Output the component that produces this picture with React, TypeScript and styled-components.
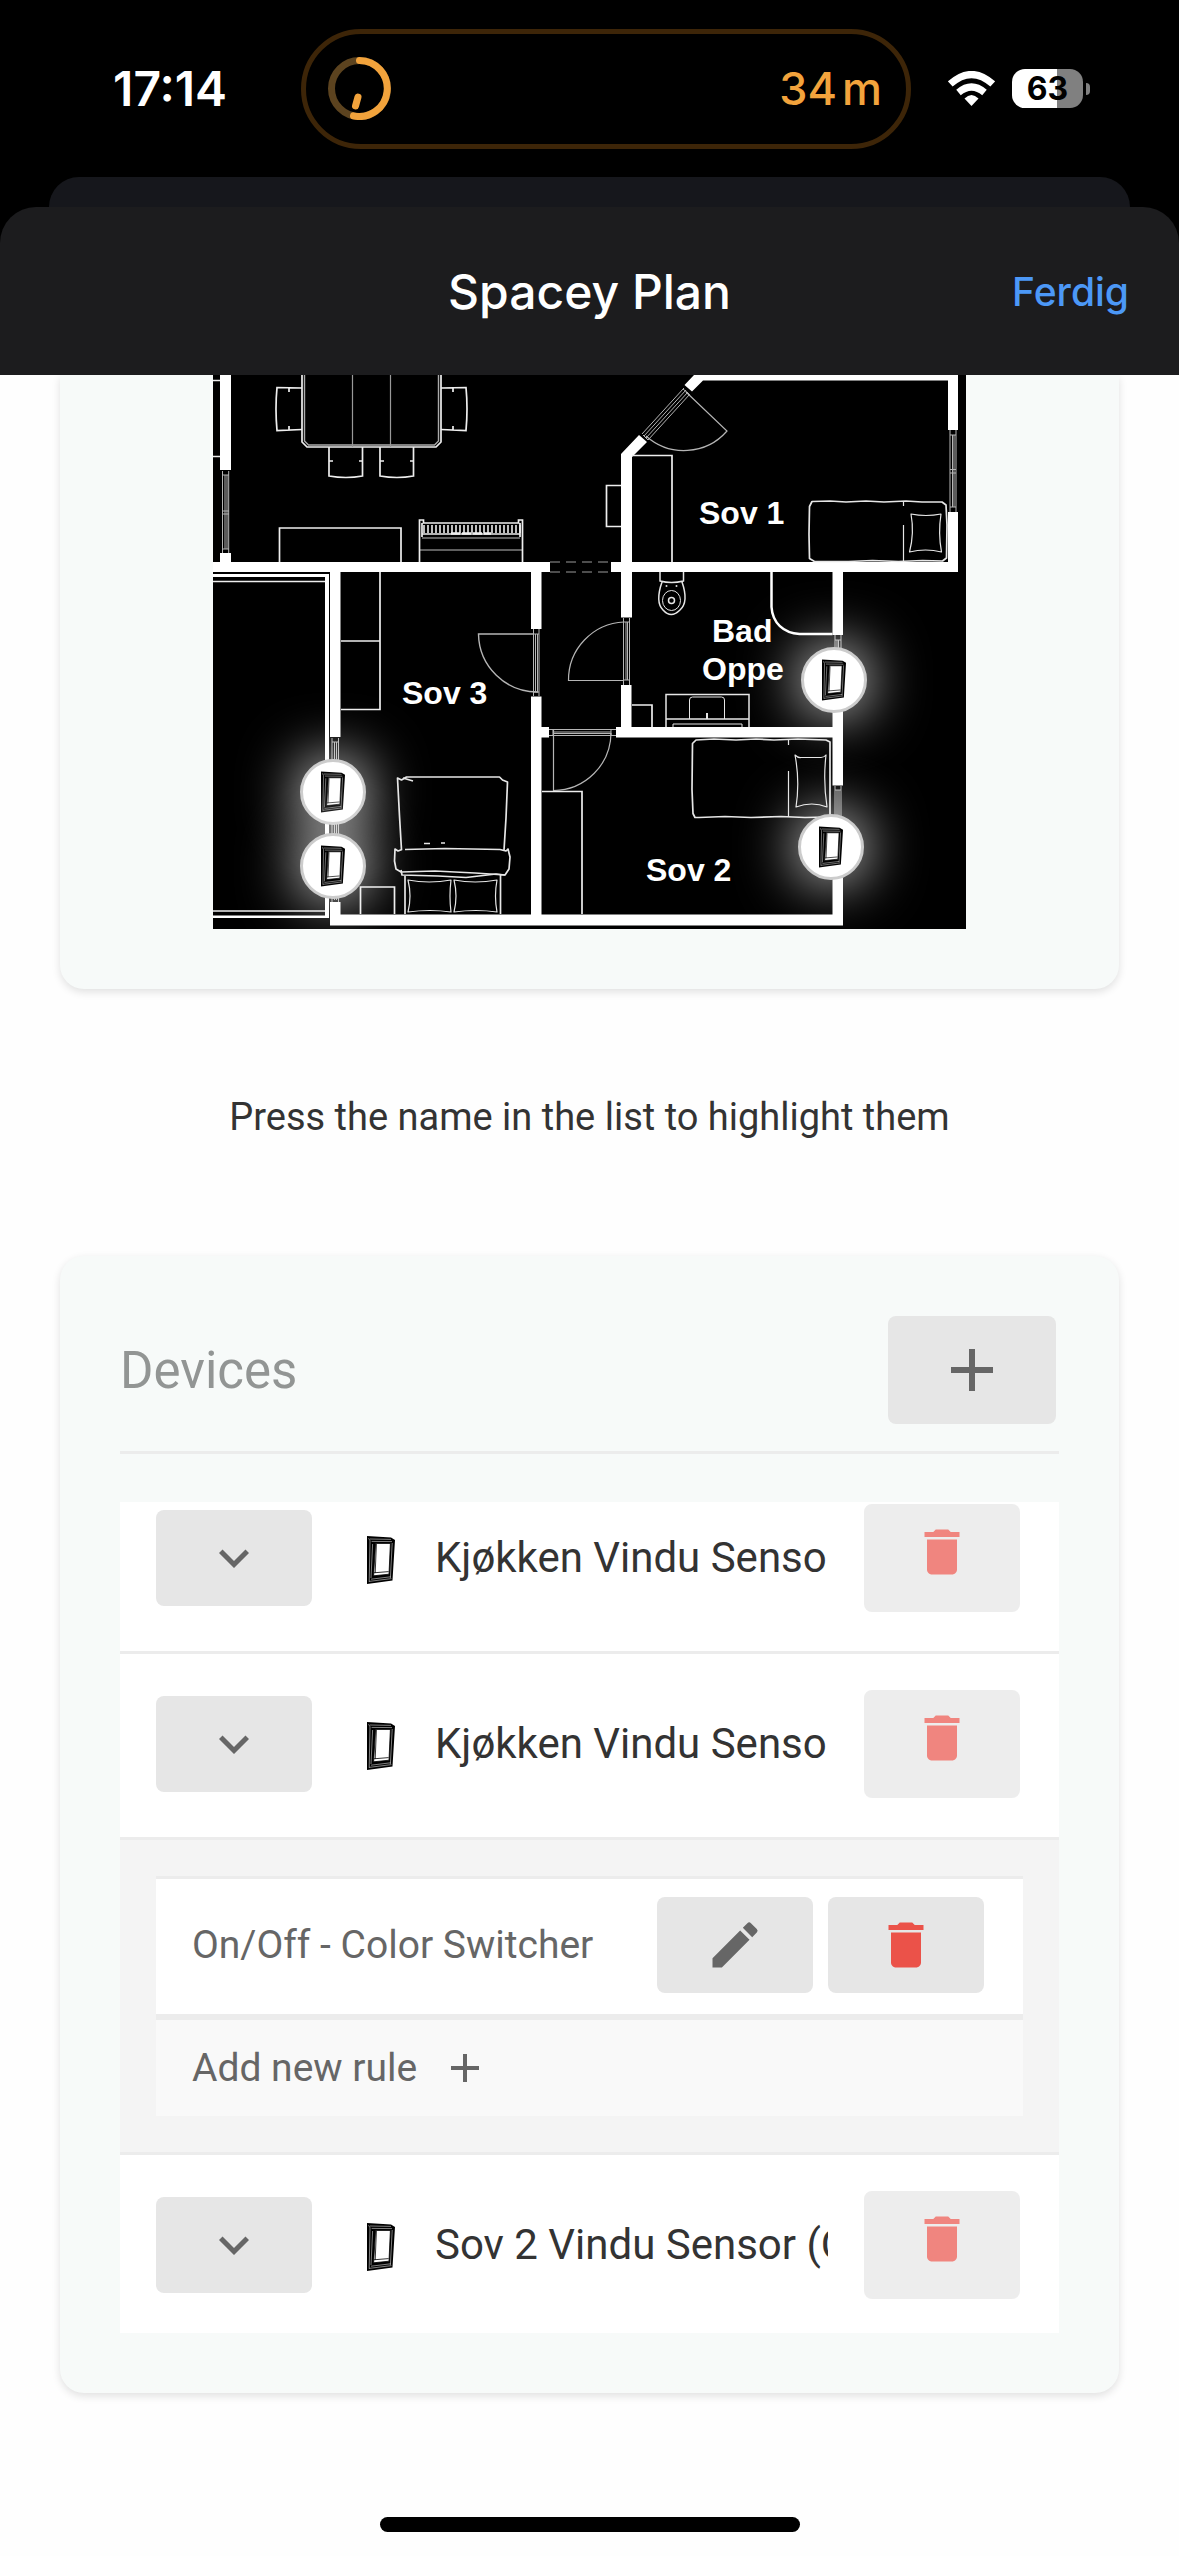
import React from "react";
import styled, { createGlobalStyle } from "styled-components";
import { MdAdd, MdDelete, MdEdit, MdExpandMore } from "react-icons/md";

const GlobalStyle = createGlobalStyle`
  *, *::before, *::after { box-sizing: border-box; }
  body {
    margin: 0;
    background: #fefefe;
    color: #333;
    font-family: Roboto, "Noto Sans", sans-serif;
  }
  button {
    border: 0;
    margin: 0;
    padding: 0;
    background: none;
    color: inherit;
    font: inherit;
    cursor: pointer;
  }
  svg { display: block; flex: none; }
`;

/* ---------- system chrome ---------- */

const Screen = styled.div`
  display: flex;
  flex-direction: column;
  min-height: 100vh;
`;

const Chrome = styled.header`
  background: #000;
  color: #fff;
  font-family: Inter, "Liberation Sans", sans-serif;
`;

const StatusBar = styled.div`
  display: grid;
  grid-template-columns: 301fr 610px 268fr;
  align-items: center;
  height: 177px;
`;

const Clock = styled.time`
  justify-self: end;
  padding-right: 74px;
  font-size: 48px;
  font-weight: 600;
`;

const Island = styled.div`
  display: flex;
  align-items: center;
  justify-content: space-between;
  height: 120px;
  padding: 0 24px 0 22px;
  border: 5px solid #3d2508;
  border-radius: 60px;
`;

const Remaining = styled.span`
  display: flex;
  gap: 5px;
  color: #f2a33c;
  font-size: 45px;
  font-weight: 500;
`;

const Indicators = styled.div`
  display: flex;
  align-items: center;
  gap: 17px;
  padding-left: 37px;
`;

const BatteryRow = styled.div`
  display: flex;
  align-items: center;
  gap: 3px;
`;

const Battery = styled.div`
  display: flex;
  align-items: center;
  justify-content: center;
  width: 71px;
  height: 39px;
  border-radius: 13px;
  background: linear-gradient(to right, #fff 63%, #808080 63%);
  color: #000;
  font-size: 32px;
  font-weight: 700;
`;

const BatteryTip = styled.div`
  width: 4px;
  height: 12px;
  border-radius: 0 6px 6px 0;
  background: #808080;
`;

const SheetBehind = styled.div`
  height: 30px;
  margin: 0 49px;
  border-radius: 30px 30px 0 0;
  background: #16171c;
`;

const SheetHeader = styled.div`
  display: grid;
  grid-template-columns: 1fr auto 1fr;
  align-items: center;
  height: 168px;
  padding: 0 50px;
  border-radius: 36px 36px 0 0;
  background: #1c1c1e;
`;

const SheetTitle = styled.h1`
  grid-column: 2;
  margin: 0;
  font-size: 48px;
  font-weight: 500;
`;

const DoneButton = styled.button`
  justify-self: end;
  color: #4c98f7;
  font-size: 39px;
  font-weight: 500;
`;

const HomeBar = styled.div`
  width: 420px;
  height: 15px;
  margin: auto auto 24px;
  border-radius: 8px;
  background: #000;
`;

/* ---------- page ---------- */

const Page = styled.main`
  display: flex;
  flex-direction: column;
  padding: 0 60px;
`;

const Card = styled.section<{ $continued?: boolean }>`
  padding: ${(p) => (p.$continued ? "0 60px 60px" : "60px")};
  border-radius: ${(p) => (p.$continued ? "0 0 24px 24px" : "24px")};
  background: #f7faf9;
  box-shadow: 0 3px 9px rgba(0, 0, 0, 0.12);
  clip-path: ${(p) => (p.$continued ? "inset(0 -20px -20px)" : "none")};
`;

const Hint = styled.p`
  margin: 103px 0 114px;
  color: #333;
  font-size: 38px;
  line-height: 50px;
  text-align: center;
`;

/* ---------- floor plan ---------- */

const Plan = styled.div`
  position: relative;
  max-width: 753px;
  margin: 0 auto;
  background: #000;
  overflow: hidden;

  > svg {
    width: 100%;
    height: auto;
  }
`;

const Pin = styled.button<{ $x: number; $y: number }>`
  position: absolute;
  left: ${(p) => ((p.$x - 213) / 753) * 100}%;
  top: ${(p) => ((p.$y - 375) / 554) * 100}%;
  display: flex;
  align-items: center;
  justify-content: center;
  width: 66px;
  height: 66px;
  margin: -33px 0 0 -33px;
  border: 3px solid #ccc;
  border-radius: 50%;
  background: #fff;
  box-shadow: 0 0 60px #fff;
`;

const pins = [
  { name: "Kjøkken left", x: 333, y: 792 },
  { name: "Kjøkken right", x: 333, y: 866 },
  { name: "Bad", x: 834, y: 680 },
  { name: "Sov 2", x: 831, y: 847 },
];

function WindowIcon({ width, height }: { width: number; height: number }) {
  return (
    <svg width={width} height={height} viewBox="0 0 28 48" aria-hidden="true">
      <path d="M0 0L24 1.5L28 4L25.5 44.5L0 48Z" fill="#000" />
      <g fill="none" stroke="#fff" strokeWidth="0.5">
        <path d="M1.600 2.200L3 4.800L2.200 45.800M3 3L24 3.400M4.600 5.400L25 5.600" />
        <path d="M2.200 45.400L24.400 42.600M4 43.200L23.600 40.800" />
        <path d="M5.600 8L4 42M25.200 7L23.400 42" />
      </g>
      <path d="M8.600 7.400L23.400 7.400L22 38.200L6.600 39.800Z" fill="#fff" stroke="#000" strokeWidth="0.8" />
      <path d="M6.800 36.800L21.600 35.600M9.400 8L8.200 37" fill="none" stroke="#000" strokeWidth="0.8" />
    </svg>
  );
}

const pianoKeys = Array.from({ length: 25 }, (_, i) => 424 + i * 4);

function FloorPlan() {
  return (
    <svg viewBox="213 375 753 554" role="img" aria-label="Floor plan">
      <rect x="213" y="375" width="753" height="554" fill="#000" />

      {/* walls */}
      <g fill="#fff">
        <path d="M220 375h11v95h-11zM220 553h11v10h-11zM213 562h337v10H213zM611 562h347v10H611z" />
        <path d="M330 572h10.500v165H330zM330 902h10.500v13H330zM330 914.500h513v11H330z" />
        <path d="M531 572h10.500v57H531zM531 696.500h10.500V915H531zM541 727h8v10.500h-8z" />
        <path d="M621 454l18-19l8 7l-15 15v160.500h-11zM621 685h10.500v42H621zM616 727h227v10.500H616z" />
        <path d="M684.500 385l9.500-10h264v55h-10v-49.500H703L692 391.500zM948 512h10v55h-10z" />
        <path d="M832.500 572H843v63h-10.500zM832.500 710H843v75.500h-10.500zM832.500 878H843v40h-10.500z" />
        <path d="M213 574h116v344H213v-2.500h112V577H213z" />
      </g>

      {/* windows and door leaves set in the walls */}
      <g fill="none" stroke="#b5b5b5" strokeWidth="1">
        <path d="M222.500 471v82M225 475v74M227 475v74M228.700 471v82M222 475h7M222 511h7M222 514h7M222 549h7" />
        <path d="M332 738v164M334.500 742v158M336.500 742v158M338.500 738v164M332 742h6M332 898h6" />
        <path d="M533.500 629v67M535.500 634v58M537.500 634v58M539 629v67M533 634h6M533 692h6" />
        <path d="M623.500 618v67M626 622v58M627.500 622v58M629.500 618v67M623 622h7M623 680h7" />
        <path d="M549 729.500h67M553 732h58M553 733.500h58M549 735.500h67M611 729v7M553 729v7" />
        <path d="M950 430v82M952.500 435v72M954 435v72M956 430v82M950 435h6M950 469.500h6M950 473h6M950 507h6" />
        <path d="M835 635v20M837 640v15M838.500 640v15M841 635v20M835 640h6M835 786v40M837 790v30M839 790v30M841 786v40M835 790h6" />
        <path d="M642 434l42-46M644 436l42-46M646 438l42-46M648 440l42-46M643 435l5 5M683 389l6 5" />
      </g>

      {/* door swings */}
      <g fill="none" stroke="#b5b5b5" strokeWidth="1.200">
        <path d="M534 634H478.500A59 59 0 0 0 538 692" strokeWidth="1.400" />
        <path d="M624 680.500H568.500A58 58 0 0 1 624 622" />
        <path d="M553.500 730V790.500A58 58 0 0 0 611 733" />
        <path d="M686 392L727 431A57 57 0 0 1 646 436" />
      </g>
      <path d="M550 562h61M550 572h61" fill="none" stroke="#999" strokeWidth="1.200" strokeDasharray="10 6" />

      {/* cupboards, benches and the dining table */}
      <g fill="none" stroke="#eee" strokeWidth="1.700">
        <path d="M213 380.500h7M213 456.500h7M213 581.500h112M213 911h112" />
        <path d="M380 572V709.500H341M341 641h39" />
        <path d="M279.500 562V528H401v34M542 791.500h40V914M632 455.500h40V562" />
        <path d="M621 485.500h-14.500v41H621M632 705h20v22M360.500 914v-27h34v27" />
        <path d="M302 375v67l5 5h129l5-5v-67" />
        <path d="M304.500 375v66l4 4h126l4-4v-66" stroke="#aaa" strokeWidth="1.400" />
        <path d="M302 388l-25-0.500q-2 21 0 43l25-1M289 388v4M289 430v-4" />
        <path d="M441 388l25-0.500q2 21 0 43l-25-1M453 388v4M453 430v-4" />
        <path d="M329 447v29q17 3 33.500 0v-29M329 461h4M359 461h4M380 447v29q17 3 33.500 0v-29M380 461h4M410 461h4" />
      </g>
      <path d="M352.500 375v72M390.500 375v72" stroke="#999" strokeWidth="1.200" />

      {/* piano */}
      <g fill="none" stroke="#eee" strokeWidth="1.700">
        <path d="M419.500 562v-42h4v3h95v-3h4v42M422 523v14M520 523v14M422 534h98" />
        <path d="M422 538h98M420 550h102" strokeWidth="0.800" />
        {pianoKeys.map((x) => (
          <path key={x} d={`M${x} 525v8`} strokeWidth="1.600" />
        ))}
        <path d="M451 533.500h40" strokeWidth="2.500" strokeDasharray="9 2" />
      </g>

      {/* bathroom */}
      <g fill="none" stroke="#e6e6e6" strokeWidth="1.500">
        <path d="M660 572v9q11.500 3 23.500 0v-9M662 582q-7 20 1 28q8 9 17 0q9-8 2-28" />
        <ellipse cx="671.500" cy="600.500" rx="9" ry="10" strokeWidth="1" />
        <circle cx="671.500" cy="600.500" r="3" />
        <path d="M771.500 572v35c1 16 12 26 28 27h33" stroke="#fff" strokeWidth="2.500" />
        <path d="M666 727v-32.500h83V727M666 719h83" />
        <path d="M689.500 719v-19q0-3 3-3h29q3 0 3 3v19M673 727v-3h69v3" strokeWidth="1" />
        <path d="M707 713v6" strokeWidth="2" />
      </g>
      <circle cx="666.500" cy="586" r="1" fill="#ddd" />
      <circle cx="676.500" cy="586" r="1" fill="#ddd" />

      {/* beds */}
      <g fill="none" stroke="#e6e6e6" strokeWidth="1.700" strokeLinejoin="round">
        <path d="M812 501.500l18-0.500l16 1l20-1l18 1l22-1l16 1h20l4 3l1 20l-0.500 33l-4 3l-20-0.500l-24 1l-26-1l-24 1h-34l-5-3l-0.500-24l0.500-28z" />
        <path d="M903.500 502v4M903.500 525v36" strokeWidth="1.200" />
        <path d="M911 514q15 3 30 0q-3 19 0.500 38q-16-4-32 0q5-19 1.500-38z" strokeWidth="1.200" />
        <path d="M696 740l18-1l22 1l20-1l18 1l24-1l28 1l4 2v73l-3 2l-22 0.500l-24-1l-30 1l-26-1l-26 1h-4l-2-4l-1-24l0.500-46z" />
        <path d="M788.500 740v5M788.500 771v46" strokeWidth="1.200" />
        <path d="M795 755q3 3 6 2.500h20q3 0 5-2.500q-3 26 1 52q-15-6-31 0q4-26-1-52z" strokeWidth="1.200" />
        <path d="M401.500 850l-2-34l-2-38l4 2l5-3h93l3 3l5 2l-1.500 36l-2 32" />
        <path d="M405 849.500l40-1l55 1l6 1.500l2-2l2 8l-1 12l-4 6l-30-2l-40-2l-34 1l-5-3l-1.500-8l0.500-12l3 2l4-1.500" />
        <path d="M401 870l1 5l36 1l28 1.500l30-3.500l9 1M405 876v38M500.500 874v40M403 778l10 3M424 843.500h6M441 843h4" />
        <path d="M408 880q21 4 43 0q-2 16 0 32q-21-3-43 0q4-16 0-32zM454 880q21 4 43 0q-3 16 0 32q-21-3-43 0q4-16 0-32z" strokeWidth="1.200" />
      </g>

      <g fill="#fff" fontFamily='"Liberation Sans", Arial, sans-serif' fontWeight="700" fontSize="32">
        <text x="699" y="524">Sov 1</text>
        <text x="402" y="704">Sov 3</text>
        <text x="646" y="881">Sov 2</text>
        <text x="712" y="642">Bad</text>
        <text x="702" y="680">Oppe</text>
      </g>
    </svg>
  );
}

/* ---------- devices ---------- */

const CardHeader = styled.div`
  display: flex;
  align-items: center;
  justify-content: space-between;
  height: 138px;
  padding: 0 3px 27px 0;
  border-bottom: 3px solid #ececec;
`;

const CardTitle = styled.h2`
  margin: 0;
  color: #929594;
  font-size: 51px;
  font-weight: 400;
`;

const SquareButton = styled.button<{ $wide?: boolean; $tall?: boolean; $danger?: boolean }>`
  display: flex;
  flex: none;
  align-items: center;
  justify-content: center;
  width: ${(p) => (p.$wide ? 168 : 156)}px;
  height: ${(p) => (p.$tall ? 108 : 96)}px;
  border-radius: 8px;
  background: #e6e6e6;
  color: ${(p) => (p.$danger ? "#eb5249" : "#666")};
`;

const FadedDelete = styled(SquareButton)`
  padding-bottom: 12px;
  opacity: 0.7;
`;

const DeviceList = styled.ul`
  margin: 48px 0 0;
  padding: 0;
  list-style: none;
  background: #fff;
`;

const Device = styled.li`
  border-bottom: 3px solid #ececec;

  &:last-child {
    border-bottom: 0;
  }
`;

const DeviceRow = styled.div`
  display: flex;
  align-items: center;
  padding: 36px 39px 39px 36px;

  ${Device}:first-child > & {
    padding-top: 2px;
  }
  ${Device}:last-child > & {
    padding-bottom: 34px;
  }
`;

const DeviceIcon = styled.span`
  display: flex;
  justify-content: center;
  width: 48px;
  margin: 4px 30px 0 45px;
`;

const DeviceName = styled.button`
  flex: 1;
  min-width: 0;
  margin-right: 36px;
  overflow: hidden;
  color: #333;
  font-size: 42px;
  line-height: 56px;
  text-align: left;
  white-space: nowrap;
`;

const RulePanel = styled.div`
  padding: 36px;
  border-top: 3px solid #ececec;
  background: #f4f4f4;
`;

const Rules = styled.ul`
  margin: 0;
  padding: 0;
  list-style: none;
`;

const Rule = styled.li`
  display: flex;
  align-items: center;
  gap: 15px;
  padding: 18px 39px 21px 36px;
  border-top: 3px solid #ececec;
  border-bottom: 6px solid #ececec;
  background: #fff;
`;

const RuleName = styled.span`
  flex: 1;
  color: #666;
  font-size: 39px;
`;

const AddRule = styled.button`
  display: flex;
  align-items: center;
  gap: 24px;
  width: 100%;
  height: 96px;
  padding: 0 36px;
  background: #f9f9f9;
  color: #666;
  font-size: 39px;
`;

type DeviceData = { id: number; name: string; rules?: string[] };

const devices: DeviceData[] = [
  { id: 1, name: "Kjøkken Vindu Sensor" },
  { id: 2, name: "Kjøkken Vindu Sensor", rules: ["On/Off - Color Switcher"] },
  { id: 3, name: "Sov 2 Vindu Sensor (O" },
];

function DeviceItem({ device }: { device: DeviceData }) {
  return (
    <Device>
      <DeviceRow>
        <SquareButton aria-label="Toggle rules" aria-expanded={Boolean(device.rules)}>
          <MdExpandMore size={60} />
        </SquareButton>
        <DeviceIcon>
          <WindowIcon width={28} height={48} />
        </DeviceIcon>
        <DeviceName>{device.name}</DeviceName>
        <FadedDelete $tall $danger aria-label="Delete device">
          <MdDelete size={60} />
        </FadedDelete>
      </DeviceRow>
      {device.rules && (
        <RulePanel>
          <Rules>
            {device.rules.map((rule) => (
              <Rule key={rule}>
                <RuleName>{rule}</RuleName>
                <SquareButton aria-label="Edit rule">
                  <MdEdit size={60} />
                </SquareButton>
                <SquareButton $danger aria-label="Delete rule">
                  <MdDelete size={60} />
                </SquareButton>
              </Rule>
            ))}
          </Rules>
          <AddRule>
            Add new rule
            <MdAdd size={48} />
          </AddRule>
        </RulePanel>
      )}
    </Device>
  );
}

export default function App() {
  return (
    <Screen>
      <GlobalStyle />
      <Chrome>
        <StatusBar>
          <Clock>17:14</Clock>
          <Island>
            <svg width="63" height="63" viewBox="0 0 63 63" fill="none" strokeWidth="7" strokeLinecap="round">
              <circle cx="31.5" cy="31.5" r="28" stroke="#5c431f" />
              <path d="M31.500 3.500A28 28 0 1 1 25.500 58.900" stroke="#f2a33c" />
              <path d="M30 40L27.500 49" stroke="#f2a33c" />
            </svg>
            <Remaining>
              <span>34</span>
              <span>m</span>
            </Remaining>
          </Island>
          <Indicators>
            <svg width="47" height="35" viewBox="0 0 47 35" aria-hidden="true">
              <path d="M23.500 35L16.500 27.500Q23.500 20.500 30.500 27.500Z" fill="#fff" />
              <g fill="none" stroke="#fff" strokeWidth="7">
                <path d="M10.500 21.500Q23.500 10.500 36.500 21.500" />
                <path d="M2.300 13Q23.500 -6 44.700 13" />
              </g>
            </svg>
            <BatteryRow>
              <Battery>63</Battery>
              <BatteryTip />
            </BatteryRow>
          </Indicators>
        </StatusBar>
        <SheetBehind />
        <SheetHeader>
          <SheetTitle>Spacey Plan</SheetTitle>
          <DoneButton>Ferdig</DoneButton>
        </SheetHeader>
      </Chrome>

      <Page>
        <Card $continued>
          <Plan>
            <FloorPlan />
            {pins.map((pin) => (
              <Pin key={pin.name} $x={pin.x} $y={pin.y} aria-label={pin.name}>
                <WindowIcon width={24} height={42} />
              </Pin>
            ))}
          </Plan>
        </Card>

        <Hint>Press the name in the list to highlight them</Hint>

        <Card>
          <CardHeader>
            <CardTitle>Devices</CardTitle>
            <SquareButton $wide $tall aria-label="Add device">
              <MdAdd size={72} />
            </SquareButton>
          </CardHeader>
          <DeviceList>
            {devices.map((device) => (
              <DeviceItem key={device.id} device={device} />
            ))}
          </DeviceList>
        </Card>
      </Page>

      <HomeBar />
    </Screen>
  );
}
